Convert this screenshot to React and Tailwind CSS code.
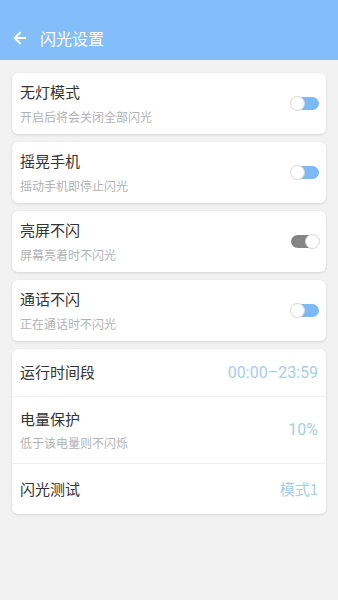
import { ArrowLeft } from "lucide-react";

const font = { fontFamily: '"Noto Sans CJK SC", "Noto Sans", sans-serif' };
const num = { fontFamily: 'Roboto, "Noto Sans", sans-serif' };

function SwitchCard({ title, sub, dark }) {
  return (
    <div className="flex h-[61px] items-center justify-between rounded-[6px] bg-white pl-[8px] pr-[7px] shadow-[0_1px_3px_rgba(0,0,0,0.12)]">
      <div className="flex flex-col">
        <span className="text-[15px] leading-[20px] text-[#333]">{title}</span>
        <span className="mt-[7px] text-[12px] leading-[16px] text-[#b3b3b3]">{sub}</span>
      </div>
      <div className="relative h-[13px] w-[28px]">
        <div
          className={`h-[13px] w-[28px] rounded-full ${
            dark ? "bg-[#858585]" : "bg-[#7db9f6]"
          }`}
        />
        <div
          className={`absolute top-[-1px] h-[15px] w-[15px] rounded-full border border-[#d6d6d6] bg-white ${
            dark ? "right-[-1px]" : "left-[-1px]"
          }`}
        />
      </div>
    </div>
  );
}

export default function App() {
  return (
    <div className="h-[600px] w-[338px] bg-[#f2f2f2]" style={font}>
      <div className="flex h-[60px] items-end bg-[#84befa] pb-[11px] pl-[11px]">
        <ArrowLeft size={18} strokeWidth={2.5} className="mb-[2px] text-white" />
        <span className="ml-[11px] text-[16px] leading-[22px] text-white">闪光设置</span>
      </div>
      <div className="flex flex-col gap-[8px] px-[12px] pt-[13px]">
        <SwitchCard title="无灯模式" sub="开启后将会关闭全部闪光" />
        <SwitchCard title="摇晃手机" sub="摇动手机即停止闪光" />
        <SwitchCard title="亮屏不闪" sub="屏幕亮着时不闪光" dark />
        <SwitchCard title="通话不闪" sub="正在通话时不闪光" />
        <div className="flex flex-col rounded-[6px] bg-white shadow-[0_1px_3px_rgba(0,0,0,0.12)]">
          <div className="flex h-[48px] items-center justify-between border-b border-[#efefef] px-[8px]">
            <span className="text-[15px] text-[#333]">运行时间段</span>
            <span className="text-[16px] text-[#a9cde6]" style={num}>
              00:00–23:59
            </span>
          </div>
          <div className="flex h-[67px] items-center justify-between border-b border-[#efefef] px-[8px]">
            <div className="flex flex-col">
              <span className="text-[15px] leading-[20px] text-[#333]">电量保护</span>
              <span className="mt-[6px] text-[12px] leading-[16px] text-[#b3b3b3]">低于该电量则不闪烁</span>
            </div>
            <span className="text-[16px] text-[#a9cde6]" style={num}>
              10%
            </span>
          </div>
          <div className="flex h-[50px] items-center justify-between px-[8px]">
            <span className="text-[15px] text-[#333]">闪光测试</span>
            <span className="text-[15px] text-[#a9cde6]">模式1</span>
          </div>
        </div>
      </div>
    </div>
  );
}
